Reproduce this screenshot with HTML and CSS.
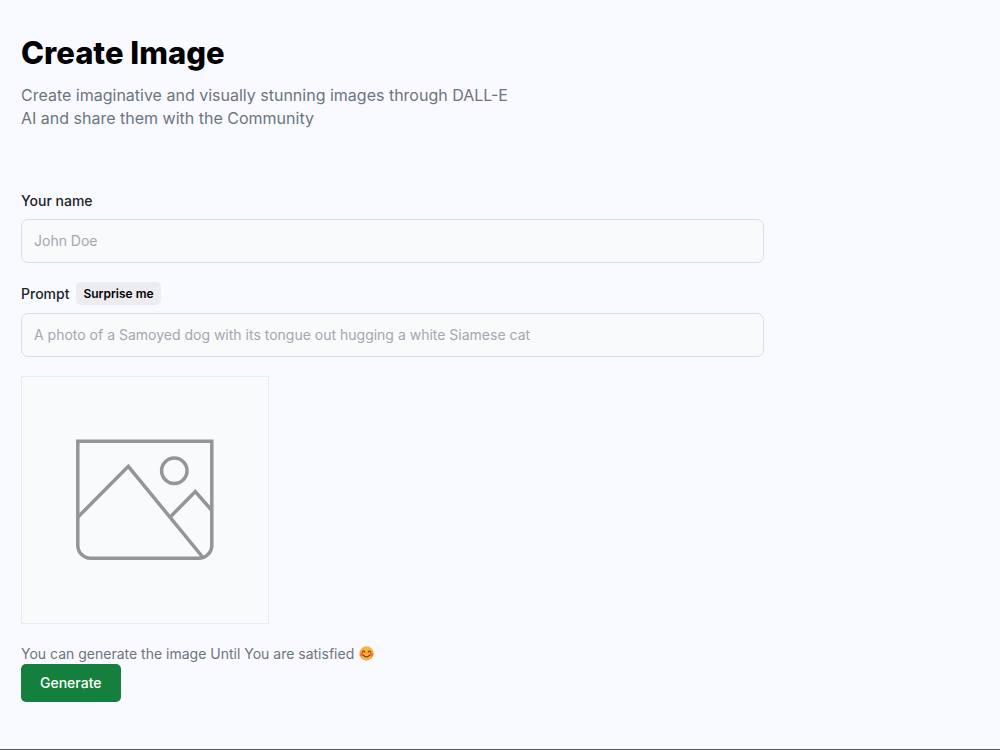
FILE: index.html
```html
<!DOCTYPE html>
<html lang="en">
<head>
<meta charset="UTF-8">
<meta name="viewport" content="width=device-width, initial-scale=1.0">
<title>Create Image</title>
<link rel="stylesheet" href="styles.css">
</head>
<body>
<main class="page">
    <section class="create">
        <header>
            <h1 class="title">Create Image</h1>
            <p class="subtitle">Create imaginative and visually stunning images through DALL-E AI and share them with the Community</p>
        </header>

        <form class="create-form">
            <div class="field">
                <div class="label-row">
                    <label for="name">Your name</label>
                </div>
                <input type="text" id="name" name="name" placeholder="John Doe" required>
            </div>
            <div class="field">
                <div class="label-row">
                    <label for="prompt">Prompt</label>
                    <button type="button" class="surprise-btn">Surprise me</button>
                </div>
                <input type="text" id="prompt" name="prompt" placeholder="A photo of a Samoyed dog with its tongue out hugging a white Siamese cat" required>
            </div>

            <div class="preview">
                <svg class="preview-icon" viewBox="1 1 246 246" fill="none" stroke="#949597" stroke-width="3.5" aria-hidden="true">
                    <path d="M56.8 65.3H190.8V169.5A13 13 0 0 1 177.8 182.3H69.8A13 13 0 0 1 56.8 169.5Z"/>
                    <path d="M57 141L107.3 90.3L182 181.5"/>
                    <path d="M149 141.2L174.3 115.5L190.8 134.5"/>
                    <circle cx="153.3" cy="94.7" r="12.7"/>
                </svg>
            </div>

            <div class="actions">
                <p class="hint">
                    You can generate the image Until You are satisfied
                    <svg class="smile" viewBox="0 0 28 28" fill="none" aria-hidden="true">
                        <circle cx="14" cy="14" r="13.5" fill="#fbb040"/>
                        <circle cx="5" cy="16" r="3.5" fill="#f4743b"/>
                        <circle cx="23" cy="16" r="3.5" fill="#f4743b"/>
                        <path d="M6 11.5Q8.5 7 11 11.5M17 11.5Q19.5 7 22 11.5M8 17Q14 23.5 20 17" stroke="#633d19" stroke-width="2" stroke-linecap="round"/>
                    </svg>
                </p>
                <button type="submit" class="generate-btn">Generate</button>
            </div>
        </form>
    </section>
</main>
</body>
</html>
```
FILE: styles.css
```css
* {
    box-sizing: border-box;
}

body {
    margin: 0;
    background-color: #f9faff;
    color: #222328;
    font-family: Inter, "Liberation Sans", sans-serif;
    font-size: 14px;
    line-height: 20px;
}

h1,
p {
    margin: 0;
}

button,
input {
    font-family: inherit;
}

.page {
    min-height: 100vh;
    padding: 33px 21px;
    border-bottom: 1px solid #55565a;
}

.create {
    max-width: 1240px;
}

.title {
    color: #000;
    font-size: 31px;
    font-weight: 800;
    line-height: 40px;
}

.subtitle {
    max-width: 496px;
    margin-top: 11px;
    color: #6c757d;
    font-size: 16px;
    line-height: 23px;
}

.create-form {
    display: flex;
    flex-direction: column;
    gap: 19px;
    max-width: 743px;
    margin-top: 61px;
}

.label-row {
    display: flex;
    align-items: center;
    gap: 7px;
    margin-bottom: 8px;
}

.label-row label {
    font-weight: 500;
}

.field input {
    display: block;
    width: 100%;
    padding: 11px 12px;
    border: 1px solid #dcdee4;
    border-radius: 7px;
    background-color: #f9fafc;
    color: #222328;
    font-size: 14px;
    line-height: 20px;
}

.field input::placeholder {
    color: #a3a7b0;
}

.surprise-btn {
    padding: 3px 7px;
    border: none;
    border-radius: 5px;
    background-color: #ececf1;
    color: #000;
    font-size: 12px;
    font-weight: 600;
    line-height: 17px;
    cursor: pointer;
}

.preview {
    width: 248px;
    border: 1px solid #e9ebef;
    background-color: #f9fafc;
}

.preview-icon {
    display: block;
    width: 100%;
}

.hint {
    display: flex;
    align-items: center;
    gap: 5px;
    color: #6c757d;
    line-height: 21px;
}

.smile {
    width: 15px;
    height: 15px;
}

.generate-btn {
    padding: 9px 19px;
    border: none;
    border-radius: 5px;
    background-color: #15803d;
    color: #fff;
    font-size: 14px;
    font-weight: 500;
    line-height: 20px;
    cursor: pointer;
}
```
